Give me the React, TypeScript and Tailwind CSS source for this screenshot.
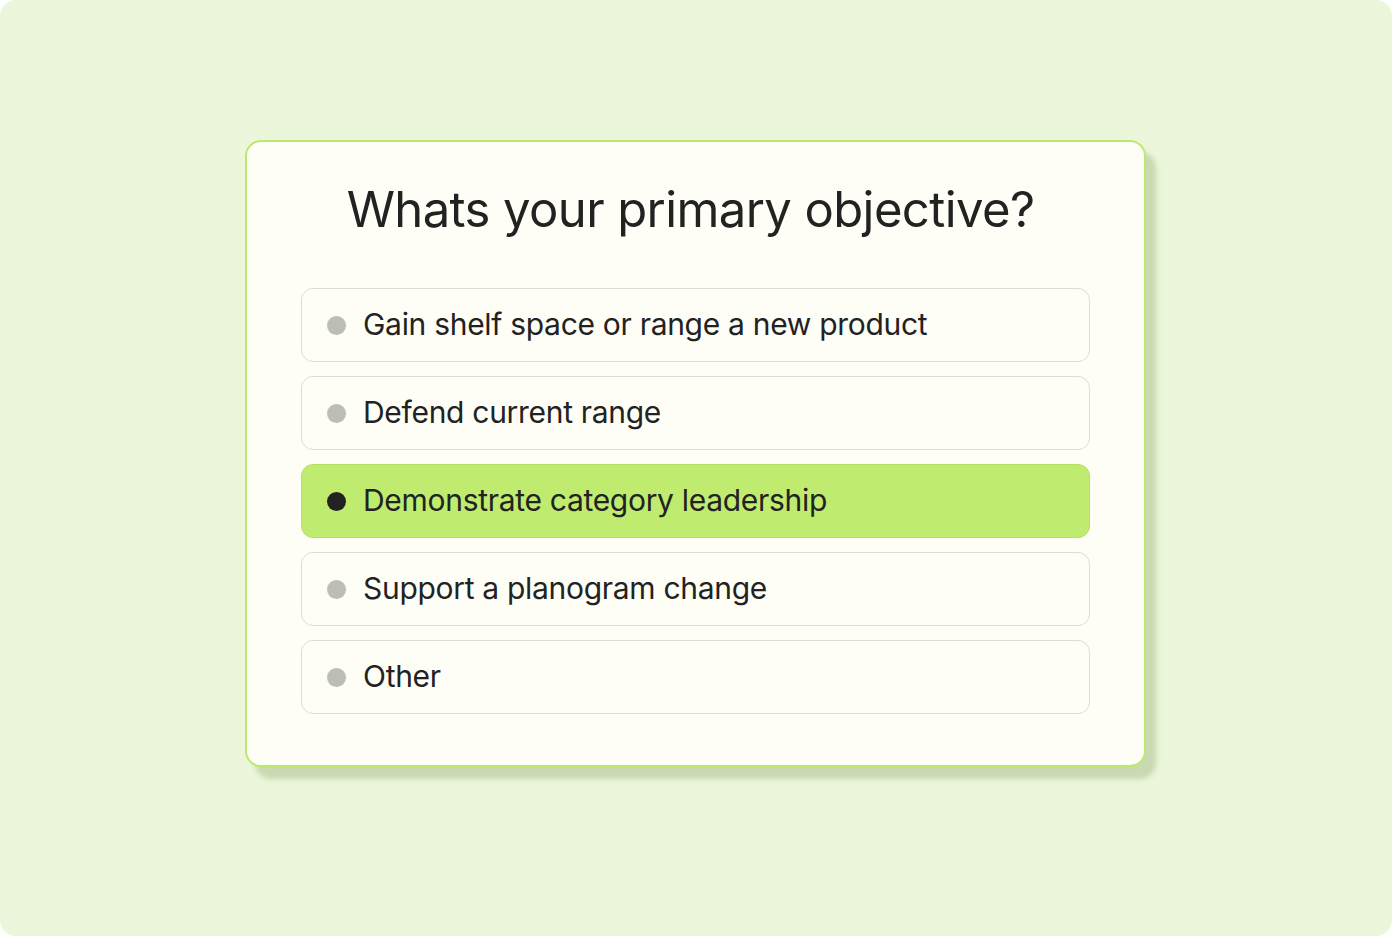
import React from 'react';

const options = [
  { label: 'Gain shelf space or range a new product', selected: false },
  { label: 'Defend current range', selected: false },
  { label: 'Demonstrate category leadership', selected: true },
  { label: 'Support a planogram change', selected: false },
  { label: 'Other', selected: false },
];

export default function App() {
  return (
    <div className="w-full h-[936px] bg-white" style={{ fontFamily: 'Inter, "Open Sans", sans-serif' }}>
      <div className="w-full h-full rounded-[16px] bg-[#ebf6da] flex pl-[245px] pt-[140px]">
        <div className="w-[901px] h-[627px] rounded-[16px] border-2 border-[#bde86f] bg-[#fefef6] shadow-[10px_12px_5px_rgba(150,175,115,0.4)] px-[54px] pt-[36px]">
          <h1 className="text-center text-[49px] leading-[64px] text-[#222222] tracking-[-0.6px] pr-[10px]">
            Whats your primary objective?
          </h1>

          <div className="mt-[46px] flex flex-col gap-[14px]">
            {options.map((o, i) => (
              <div
                key={i}
                className={`h-[74px] rounded-[12px] border flex items-center pl-[25px] gap-[17px] ${
                  o.selected ? 'bg-[#bfeb6e] border-[#b6e064]' : 'bg-[#fefef6] border-[#dcdcd6]'
                }`}
              >
                <span className={`w-[19px] h-[19px] rounded-full ${o.selected ? 'bg-[#222222]' : 'bg-[#bdbdb8]'}`} />
                <span className="text-[30px] leading-[36px] text-[#222222] tracking-[-0.3px] -mt-[2px]">{o.label}</span>
              </div>
            ))}
          </div>
        </div>
      </div>
    </div>
  );
}
